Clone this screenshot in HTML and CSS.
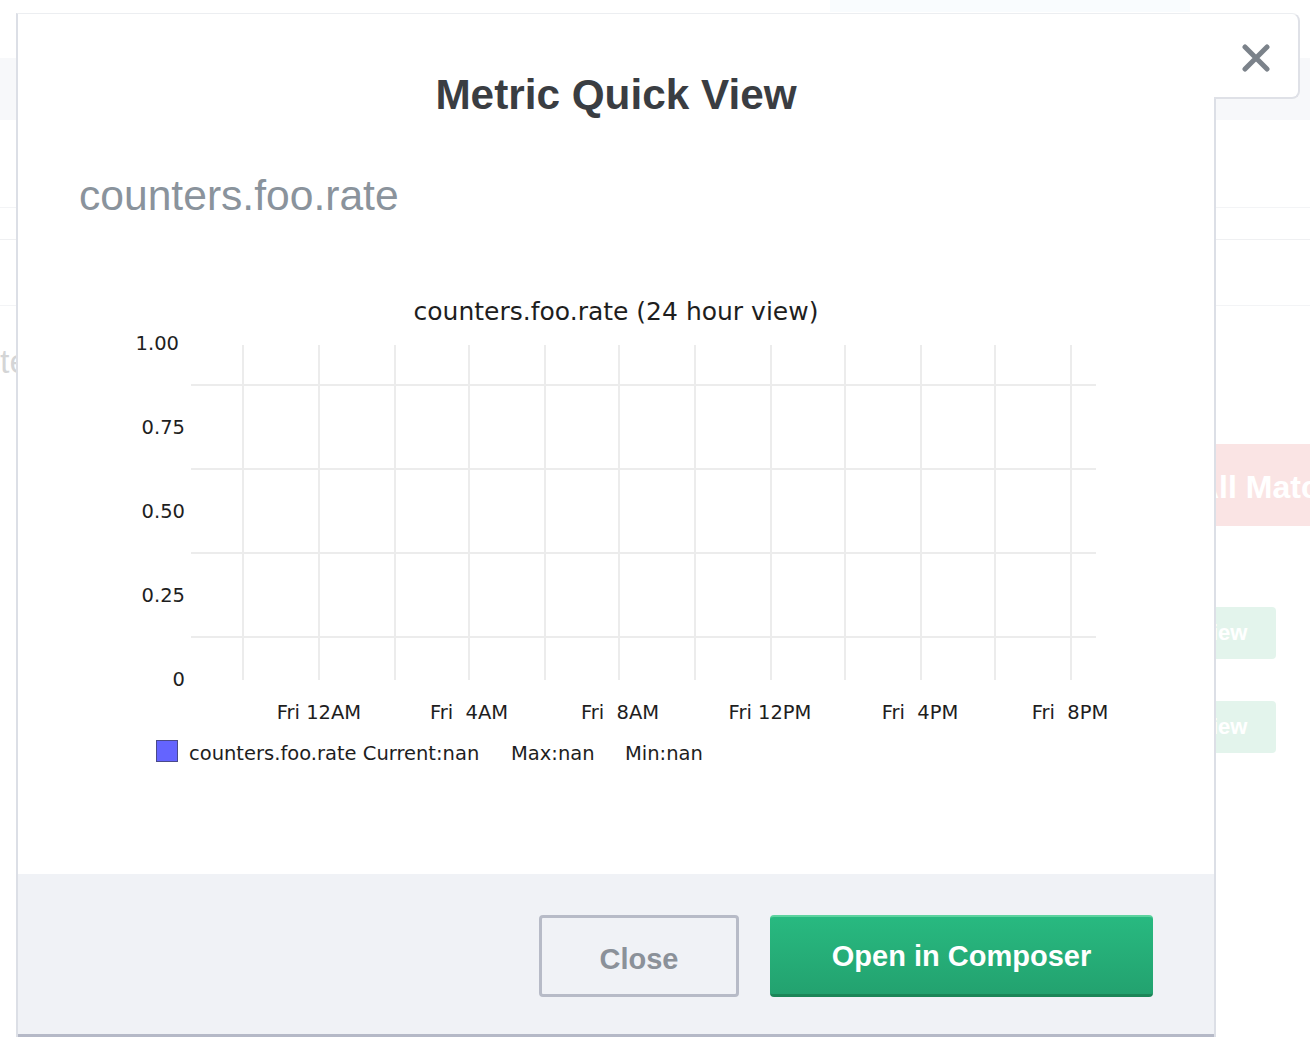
FILE: index.html
```html
<!DOCTYPE html>
<html lang="en">
<head>
    <meta charset="UTF-8">
    <meta name="viewport" content="width=device-width, initial-scale=1.0">
    <title>Metric Quick View</title>
    <link rel="stylesheet" href="styles.css">
</head>
<body>
    <!-- page behind the modal -->
    <div class="page">
        <div class="topnav"><div class="topnav-tab"></div></div>
        <div class="crumbs"></div>
        <div class="filters"></div>
        <div class="row row-short"></div>
        <div class="row row-tall"></div>
        <div class="results">
            <div class="results-main">
                <h2 class="results-title">te</h2>
            </div>
            <div class="results-side">
                <button class="btn-danger">All Matc</button>
                <button class="btn-view">View</button>
                <button class="btn-view">View</button>
            </div>
        </div>
    </div>

    <div class="overlay">
        <div class="modal">
            <button class="modal-close" aria-label="Close">
                <svg width="28" height="28" viewBox="0 0 28 28">
                    <path d="M3 3 L25 25 M25 3 L3 25" stroke="#7b828a" stroke-width="5" stroke-linecap="round" fill="none"/>
                </svg>
            </button>

            <div class="modal-body">
                <h1 class="modal-title">Metric Quick View</h1>
                <h3 class="metric-name">counters.foo.rate</h3>

                <svg class="chart" width="1000" height="490" viewBox="0 0 1000 490">
                    <text class="chart-title" x="496" y="35">counters.foo.rate (24 hour view)</text>

                    <g class="grid">
                        <line x1="71" y1="100" x2="976" y2="100"/>
                        <line x1="71" y1="184" x2="976" y2="184"/>
                        <line x1="71" y1="268" x2="976" y2="268"/>
                        <line x1="71" y1="352" x2="976" y2="352"/>
                        <line x1="123" y1="60" x2="123" y2="395"/>
                        <line x1="199" y1="60" x2="199" y2="395"/>
                        <line x1="275" y1="60" x2="275" y2="395"/>
                        <line x1="349" y1="60" x2="349" y2="395"/>
                        <line x1="425" y1="60" x2="425" y2="395"/>
                        <line x1="499" y1="60" x2="499" y2="395"/>
                        <line x1="575" y1="60" x2="575" y2="395"/>
                        <line x1="651" y1="60" x2="651" y2="395"/>
                        <line x1="725" y1="60" x2="725" y2="395"/>
                        <line x1="801" y1="60" x2="801" y2="395"/>
                        <line x1="875" y1="60" x2="875" y2="395"/>
                        <line x1="951" y1="60" x2="951" y2="395"/>
                    </g>

                    <g class="y-labels">
                        <text x="59" y="65">1.00</text>
                        <text x="65" y="149">0.75</text>
                        <text x="65" y="233">0.50</text>
                        <text x="65" y="317">0.25</text>
                        <text x="65" y="401">0</text>
                    </g>

                    <g class="x-labels">
                        <text x="199" y="434">Fri 12AM</text>
                        <text x="349" y="434">Fri  4AM</text>
                        <text x="500" y="434">Fri  8AM</text>
                        <text x="650" y="434">Fri 12PM</text>
                        <text x="800" y="434">Fri  4PM</text>
                        <text x="950" y="434">Fri  8PM</text>
                    </g>

                    <rect class="legend-swatch" x="36.5" y="455.5" width="21" height="21"/>
                    <g class="legend">
                        <text x="69" y="475">counters.foo.rate Current:nan</text>
                        <text x="391" y="475">Max:nan</text>
                        <text x="505" y="475">Min:nan</text>
                    </g>
                </svg>
            </div>

            <div class="modal-footer">
                <button class="btn-close">Close</button>
                <button class="btn-composer">Open in Composer</button>
            </div>
        </div>
    </div>
</body>
</html>
```

FILE: styles.css
```css
body {
    margin: 0;
    font-family: "Liberation Sans", Arial, sans-serif;
    background-color: #fff;
    overflow: hidden;
}

/* Page behind the modal (it is washed out by the overlay) */
.page {
    height: 1054px;
}
.topnav {
    height: 12px;
}
.topnav-tab {
    margin-left: 830px;
    width: 360px;
    height: 12px;
    background-color: #e2eff9;
}
.crumbs {
    margin-top: 46px;
    height: 62px;
    background-color: #d8dce4;
}
.filters {
    height: 87px;
    border-bottom: 1px solid #c3c7cf;
}
.row {
    border-bottom: 1px solid #afb4bd;
}
.row-short {
    height: 31px;
}
.row-tall {
    height: 65px;
    border-bottom-color: #c3c7cf;
}
.results {
    display: grid;
    grid-template-columns: 1170px 1fr;
}
.results-title {
    margin: 36px 0 0 0;
    font-size: 34px;
    font-weight: normal;
    color: #2a2f36;
}
.results-side {
    display: flex;
    flex-direction: column;
    align-items: flex-start;
}
.btn-danger {
    margin-top: 138px;
    width: 140px;
    height: 82px;
    padding: 4px 0 0 26px;
    text-align: left;
    white-space: nowrap;
    font-family: inherit;
    font-size: 32px;
    font-weight: bold;
    color: #fff;
    background-color: #e67878;
    border: none;
    border-radius: 4px 0 0 4px;
}
.btn-view {
    margin-top: 81px;
    width: 106px;
    height: 52px;
    padding: 0 28px 0 27px;
    font-family: inherit;
    font-size: 22px;
    font-weight: bold;
    color: #fff;
    background-color: #73c8a0;
    border: none;
    border-radius: 4px;
}
.btn-view + .btn-view {
    margin-top: 42px;
}

/* Overlay + modal */
.overlay {
    position: fixed;
    top: 0;
    left: 0;
    right: 0;
    bottom: 0;
    background-color: rgba(255, 255, 255, 0.8);
    padding: 13px 0 0 16px;
}
.modal {
    position: relative;
    width: 1196px;
    background-color: #fff;
    border-top: 1px solid #eceef1;
    border-left: 2px solid #dcdfe6;
    border-right: 2px solid #dcdfe6;
}
.modal-close {
    position: absolute;
    top: -1px;
    left: 100%;
    width: 86px;
    height: 86px;
    padding: 4px 0 0 0;
    display: flex;
    align-items: center;
    justify-content: center;
    background-color: #fff;
    border: 1px solid #eceef1;
    border-right: 2px solid #dfe1e7;
    border-bottom: 2px solid #dfe1e7;
    border-left: none;
    border-radius: 0 8px 8px 0;
    box-sizing: border-box;
    cursor: pointer;
}
.modal-body {
    padding: 56px 0 99px 0;
}
.modal-title {
    margin: 0;
    text-align: center;
    font-size: 42.3px;
    line-height: 50px;
    font-weight: bold;
    color: #3a3d42;
}
.metric-name {
    margin: 50px 0 0 61px;
    font-size: 42.6px;
    line-height: 50px;
    font-weight: normal;
    color: #8a939c;
}
.chart {
    display: block;
    margin: 65px 0 0 102px;
}

/* Chart (graphite style) */
.chart text {
    font-family: "DejaVu Sans", sans-serif;
    font-size: 19.5px;
    fill: #1e1e1e;
    white-space: pre;
}
.chart .chart-title {
    font-size: 25px;
    text-anchor: middle;
}
.grid line {
    stroke: #ececec;
    stroke-width: 2;
}
.y-labels text {
    text-anchor: end;
}
.x-labels text {
    text-anchor: middle;
}
.legend-swatch {
    fill: #6464ff;
    stroke: #4a4a8a;
    stroke-width: 1;
}

.modal-footer {
    height: 163px;
    display: flex;
    justify-content: flex-end;
    align-items: center;
    gap: 31px;
    padding: 4px 61px 0 0;
    box-sizing: border-box;
    background-color: #f0f2f6;
    border-bottom: 3px solid #b5b9c7;
}
.modal-footer button {
    height: 82px;
    font-family: inherit;
    font-size: 29px;
    font-weight: bold;
    border-radius: 4px;
    box-sizing: border-box;
    cursor: pointer;
}
.btn-close {
    width: 200px;
    padding-top: 7px;
    color: #8b9199;
    background-color: transparent;
    border: 3px solid #b7bbc7;
}
.btn-composer {
    width: 383px;
    padding-top: 3px;
    color: #fff;
    background: linear-gradient(#28b980, #23a26f);
    border: none;
    border-top: 2px solid #5dd39f;
    border-bottom: 3px solid #1c8658;
}
```
